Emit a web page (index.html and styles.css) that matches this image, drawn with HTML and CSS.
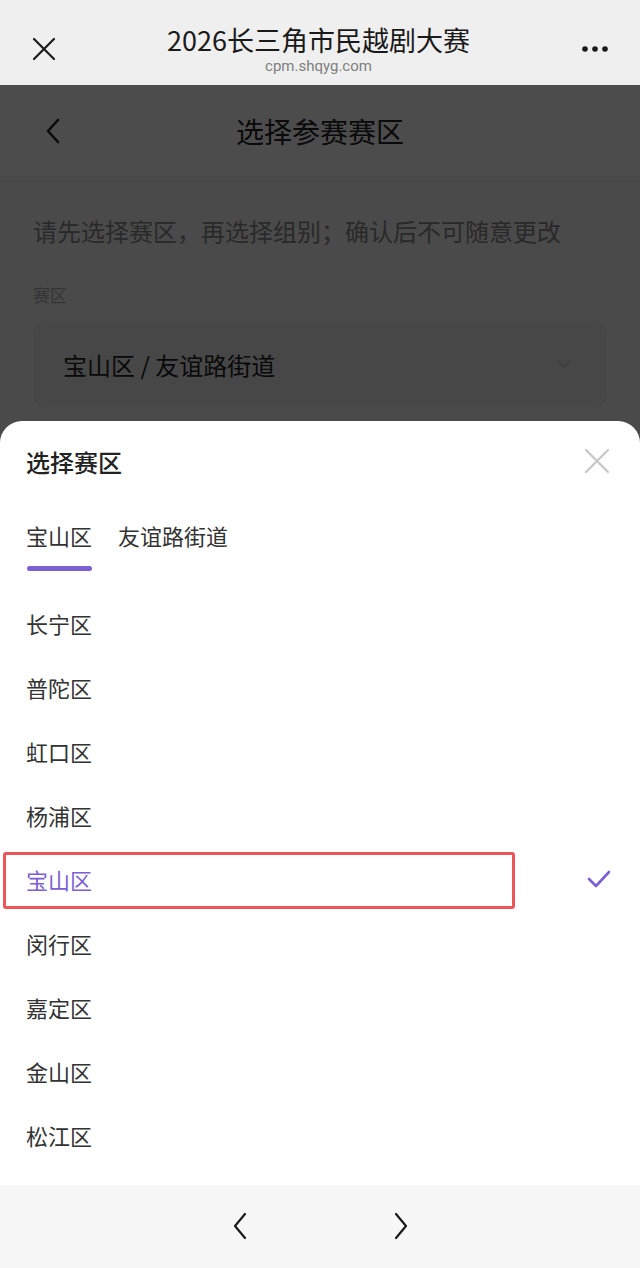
FILE: index.html
```html
<!DOCTYPE html>
<html lang="zh-CN">
<head>
    <meta charset="UTF-8">
    <title>选择参赛赛区</title>
    <link rel="stylesheet" href="styles.css">
</head>
<body>
<div class="g-app">
    <!--浏览器顶栏-->
    <div class="m-topbar">
        <svg class="u-icon-close" width="24" height="24" viewBox="0 0 24 24">
            <path d="M2 2 L22 22 M22 2 L2 22" stroke="#1a1a1a" stroke-width="2.2" fill="none" stroke-linecap="round"/>
        </svg>
        <div class="m-topbar-title">
            <div class="u-title">2026长三角市民越剧大赛</div>
            <div class="u-url">cpm.shqyg.com</div>
        </div>
        <svg class="u-icon-more" width="28" height="8" viewBox="0 0 28 8">
            <circle cx="4" cy="4" r="2.8" fill="#1a1a1a"/>
            <circle cx="14" cy="4" r="2.8" fill="#1a1a1a"/>
            <circle cx="24" cy="4" r="2.8" fill="#1a1a1a"/>
        </svg>
    </div>

    <div class="g-content">
        <!--页面本身-->
        <div class="m-header">
            <svg class="u-back" width="16" height="26" viewBox="0 0 16 26">
                <path d="M13 2 L3 13 L13 24" stroke="#222" stroke-width="2.6" fill="none" stroke-linecap="round" stroke-linejoin="round"/>
            </svg>
            <h1>选择参赛赛区</h1>
        </div>
        <div class="m-form">
            <p class="u-tip">请先选择赛区，再选择组别；确认后不可随意更改</p>
            <div class="u-label">赛区</div>
            <div class="u-select">
                <span>宝山区 / 友谊路街道</span>
                <svg width="16" height="10" viewBox="0 0 16 10">
                    <path d="M2 2 L8 8 L14 2" stroke="#c8c8c8" stroke-width="1.6" fill="none" stroke-linecap="round" stroke-linejoin="round"/>
                </svg>
            </div>
        </div>

        <!--遮罩-->
        <div class="m-mask"></div>

        <!--选择赛区弹层-->
        <div class="m-sheet">
            <div class="m-sheet-head">
                <h2>选择赛区</h2>
                <svg width="26" height="26" viewBox="0 0 26 26">
                    <path d="M2 2 L24 24 M24 2 L2 24" stroke="#c8c8c8" stroke-width="2.4" fill="none" stroke-linecap="round"/>
                </svg>
            </div>
            <ul class="m-tabs">
                <li class="z-active">宝山区</li>
                <li>友谊路街道</li>
            </ul>
            <ul class="m-list">
                <li>长宁区</li>
                <li>普陀区</li>
                <li>虹口区</li>
                <li>杨浦区</li>
                <li class="z-selected">
                    宝山区
                    <svg class="u-check" width="24" height="20" viewBox="0 0 24 20">
                        <path d="M2 10 L9 17 L22 3" stroke="#7b5fd3" stroke-width="2.6" fill="none" stroke-linecap="round" stroke-linejoin="round"/>
                    </svg>
                    <div class="u-mark"></div>
                </li>
                <li>闵行区</li>
                <li>嘉定区</li>
                <li>金山区</li>
                <li>松江区</li>
            </ul>
        </div>
    </div>

    <!--浏览器底栏-->
    <div class="m-bottombar">
        <svg width="16" height="28" viewBox="0 0 16 28">
            <path d="M13 2 L3 14 L13 26" stroke="#1a1a1a" stroke-width="2.2" fill="none" stroke-linecap="round" stroke-linejoin="round"/>
        </svg>
        <svg width="16" height="28" viewBox="0 0 16 28">
            <path d="M3 2 L13 14 L3 26" stroke="#1a1a1a" stroke-width="2.2" fill="none" stroke-linecap="round" stroke-linejoin="round"/>
        </svg>
    </div>
</div>
</body>
</html>
```

FILE: styles.css
```css
* {
    padding: 0;
    margin: 0;
    box-sizing: border-box;
}
body {
    font-family: "Noto Sans CJK SC", "Noto Sans", sans-serif;
    color: #333;
}
ul {
    list-style: none;
}
.g-app {
    width: 640px;
    height: 1268px;
    display: flex;
    flex-direction: column;
    overflow: hidden;
}

/* 顶栏 */
.m-topbar {
    height: 85px;
    flex-shrink: 0;
    background-color: #efefef;
    display: flex;
    align-items: center;
    padding: 12px 31px 0 32px;
}
.m-topbar-title {
    flex: 1;
    text-align: center;
}
.m-topbar-title .u-title {
    font-size: 27px;
    font-weight: 400;
    line-height: 34px;
    color: #1a1a1a;
}
.m-topbar-title .u-url {
    font-family: Roboto, "Noto Sans", sans-serif;
    font-size: 15px;
    line-height: 18px;
    color: #808080;
}

/* 页面内容 */
.g-content {
    flex: 1;
    position: relative;
    background-color: #f8f8f8;
}
.m-header {
    height: 92px;
    background-color: #fff;
    border-bottom: 1px solid #ececec;
    display: flex;
    align-items: center;
    justify-content: center;
    position: relative;
}
.m-header .u-back {
    position: absolute;
    left: 45px;
    top: 33px;
}
.m-header h1 {
    font-size: 28px;
    font-weight: 400;
    color: #222;
}
.m-form {
    padding: 37px 33px 0;
}
.u-tip {
    font-size: 24px;
    line-height: 34px;
    color: #8a8a8a;
}
.u-label {
    font-size: 17px;
    line-height: 24px;
    color: #b0b0b0;
    margin-top: 35px;
}
.u-select {
    margin-top: 14px;
    height: 86px;
    border-radius: 12px;
    background-color: #eee;
    display: flex;
    align-items: center;
    justify-content: space-between;
    padding: 0 35px 0 30px;
    font-size: 24px;
    color: #222;
}

/* 遮罩和弹层 */
.m-mask {
    position: absolute;
    top: 0;
    left: 0;
    right: 0;
    bottom: 0;
    background-color: rgba(0, 0, 0, 0.7);
}
.m-sheet {
    position: absolute;
    left: 0;
    right: 0;
    bottom: 0;
    height: 764px;
    background-color: #fff;
    border-radius: 22px 22px 0 0;
}
.m-sheet-head {
    height: 80px;
    display: flex;
    align-items: center;
    justify-content: space-between;
    padding: 0 30px 0 26px;
}
.m-sheet-head h2 {
    font-size: 24px;
    font-weight: 500;
    color: #222;
}
.m-tabs {
    display: flex;
    gap: 26px;
    padding: 20px 26px 20px;
}
.m-tabs li {
    font-size: 22px;
    line-height: 28px;
    color: #333;
    padding-bottom: 22px;
    position: relative;
}
.m-tabs li.z-active::after {
    content: "";
    position: absolute;
    left: 1px;
    right: 0;
    bottom: 0;
    height: 5px;
    border-radius: 3px;
    background-color: #7b5fd3;
}
.m-list li {
    height: 64px;
    display: flex;
    align-items: center;
    justify-content: space-between;
    padding: 0 29px 0 26px;
    font-size: 22px;
    color: #333;
    position: relative;
}
.m-list li.z-selected {
    color: #7b5fd3;
}
.m-list .u-mark {
    position: absolute;
    left: 3px;
    right: 125px;
    top: 5px;
    bottom: 2px;
    border: 3px solid #ec5656;
    border-radius: 3px;
}

/* 底栏 */
.m-bottombar {
    height: 83px;
    flex-shrink: 0;
    background-color: #f7f7f7;
    display: flex;
    align-items: center;
    justify-content: center;
    gap: 145px;
    padding-bottom: 2px;
}
```
